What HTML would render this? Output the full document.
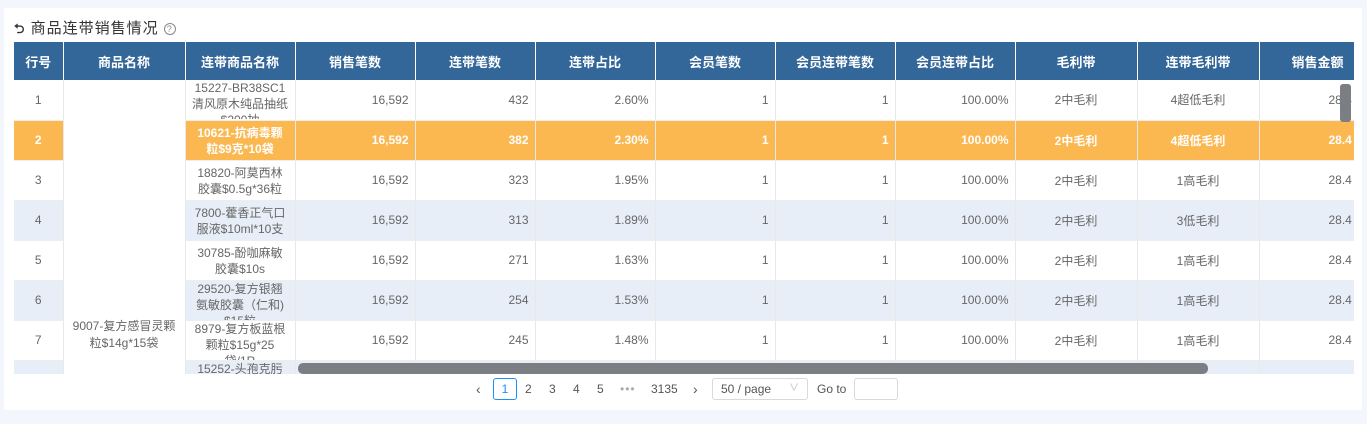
<!DOCTYPE html>
<html><head><meta charset="utf-8"><style>
*{margin:0;padding:0;box-sizing:border-box}
body{width:1367px;height:424px;background:#f3f6fc;font-family:"Liberation Sans","Noto Sans CJK SC",sans-serif;overflow:hidden;position:relative}
.panel{position:absolute;left:4px;top:8px;width:1358px;height:402px;background:#fff}
.title{position:absolute;left:14px;top:17px;font-size:15px;color:#333;letter-spacing:1px}
.wrap{position:absolute;left:14px;top:42px;width:1340px;height:332px;overflow:hidden}
table{border-collapse:collapse;table-layout:fixed;width:1420px}
th{background:#336699;color:#fff;font-size:13px;font-weight:bold;height:38px;border-right:1px solid #fff;text-align:center}
th.r{text-align:right;padding-right:8px}
td{height:40px;font-size:12px;color:#666;border-right:1px solid #e8e8e8;border-bottom:1px solid #eee;padding:0 6px;text-align:right;overflow:hidden}
td.c{text-align:center}
td.n{padding:0}
td.n div{height:39px;overflow:hidden;text-align:center;line-height:16px;padding-top:4px}
td.n div.t3{padding-top:0}
tr.b td{background:#e8eef8}
tr.o td{background:#fbb851;color:#fff;font-weight:bold}
tr td.m{background:#fff!important;border-bottom:none}
.merge{position:absolute;left:63px;top:318px;width:122px;text-align:center;font-size:12px;color:#666;line-height:17px}
.hs{position:absolute;left:298px;top:363px;width:910px;height:11px;background:#7b7e82;border-radius:5px}
.vs{position:absolute;left:1340px;top:84px;width:11px;height:38px;background:#7b7e82;border-radius:3px}
.pg{position:absolute;top:378px;height:22px;font-size:12px;color:#555;line-height:22px}
</style></head><body>
<div class="panel"></div>
<div class="title"><span style="font-size:13px;font-weight:bold">⮌</span> 商品连带销售情况 <span style="display:inline-block;width:12px;height:12px;border:1px solid #888;border-radius:50%;font-size:9px;line-height:10px;text-align:center;color:#888;vertical-align:1px">?</span></div>
<div class="wrap"><table>
<colgroup><col style="width:49px"><col style="width:122px"><col style="width:110px"><col style="width:120px"><col style="width:120px"><col style="width:120px"><col style="width:120px"><col style="width:120px"><col style="width:120px"><col style="width:122px"><col style="width:122px"><col style="width:175px"></colgroup>
<tr><th>行号</th><th>商品名称</th><th>连带商品名称</th><th>销售笔数</th><th>连带笔数</th><th>连带占比</th><th>会员笔数</th><th>会员连带笔数</th><th>会员连带占比</th><th>毛利带</th><th>连带毛利带</th><th style="text-align:left;padding-left:32px">销售金额</th></tr>
<tr><td class="c">1</td><td class="m"></td><td class="n"><div class="t3">15227-BR38SC1<br>清风原木纯品抽纸<br>$200抽</div></td><td>16,592</td><td>432</td><td>2.60%</td><td>1</td><td>1</td><td>100.00%</td><td class="c">2中毛利</td><td class="c">4超低毛利</td><td style="text-align:left;padding-left:69px">28.4</td></tr>
<tr class="o"><td class="c">2</td><td class="m"></td><td class="n"><div>10621-抗病毒颗<br>粒$9克*10袋</div></td><td>16,592</td><td>382</td><td>2.30%</td><td>1</td><td>1</td><td>100.00%</td><td class="c">2中毛利</td><td class="c">4超低毛利</td><td style="text-align:left;padding-left:69px">28.4</td></tr>
<tr><td class="c">3</td><td class="m"></td><td class="n"><div>18820-阿莫西林<br>胶囊$0.5g*36粒</div></td><td>16,592</td><td>323</td><td>1.95%</td><td>1</td><td>1</td><td>100.00%</td><td class="c">2中毛利</td><td class="c">1高毛利</td><td style="text-align:left;padding-left:69px">28.4</td></tr>
<tr class="b"><td class="c">4</td><td class="m"></td><td class="n"><div>7800-藿香正气口<br>服液$10ml*10支</div></td><td>16,592</td><td>313</td><td>1.89%</td><td>1</td><td>1</td><td>100.00%</td><td class="c">2中毛利</td><td class="c">3低毛利</td><td style="text-align:left;padding-left:69px">28.4</td></tr>
<tr><td class="c">5</td><td class="m"></td><td class="n"><div>30785-酚咖麻敏<br>胶囊$10s</div></td><td>16,592</td><td>271</td><td>1.63%</td><td>1</td><td>1</td><td>100.00%</td><td class="c">2中毛利</td><td class="c">1高毛利</td><td style="text-align:left;padding-left:69px">28.4</td></tr>
<tr class="b"><td class="c">6</td><td class="m"></td><td class="n"><div class="t3">29520-复方银翘<br>氨敏胶囊（仁和)<br>$15粒</div></td><td>16,592</td><td>254</td><td>1.53%</td><td>1</td><td>1</td><td>100.00%</td><td class="c">2中毛利</td><td class="c">1高毛利</td><td style="text-align:left;padding-left:69px">28.4</td></tr>
<tr><td class="c">7</td><td class="m"></td><td class="n"><div class="t3">8979-复方板蓝根<br>颗粒$15g*25<br>袋/1R</div></td><td>16,592</td><td>245</td><td>1.48%</td><td>1</td><td>1</td><td>100.00%</td><td class="c">2中毛利</td><td class="c">1高毛利</td><td style="text-align:left;padding-left:69px">28.4</td></tr>
<tr class="b"><td class="c"></td><td class="m"></td><td class="n"><div class="t3">15252-头孢克肟<br>分散片</div></td><td></td><td></td><td></td><td></td><td></td><td></td><td></td><td></td><td></td></tr>
</table></div>
<div class="merge">9007-复方感冒灵颗<br>粒$14g*15袋</div>
<div class="hs"></div><div class="vs"></div>
<div class="pg" style="left:476px;font-size:14px">‹</div>
<div class="pg" style="left:493px;width:24px;border:1px solid #1890ff;border-radius:3px;color:#1890ff;text-align:center;line-height:20px">1</div>
<div class="pg" style="left:525px">2</div>
<div class="pg" style="left:549px">3</div>
<div class="pg" style="left:573px">4</div>
<div class="pg" style="left:597px">5</div>
<div class="pg" style="left:620px;color:#aaa;letter-spacing:1px">•••</div>
<div class="pg" style="left:651px">3135</div>
<div class="pg" style="left:693px;font-size:14px">›</div>
<div class="pg" style="left:712px;width:96px;border:1px solid #d9d9d9;border-radius:3px;padding-left:8px;line-height:20px">50 / page<span style="position:absolute;right:8px;color:#bbb;font-size:10px">∨</span></div>
<div class="pg" style="left:817px">Go to</div>
<div class="pg" style="left:854px;width:44px;border:1px solid #d9d9d9;border-radius:3px"></div>
</body></html>
